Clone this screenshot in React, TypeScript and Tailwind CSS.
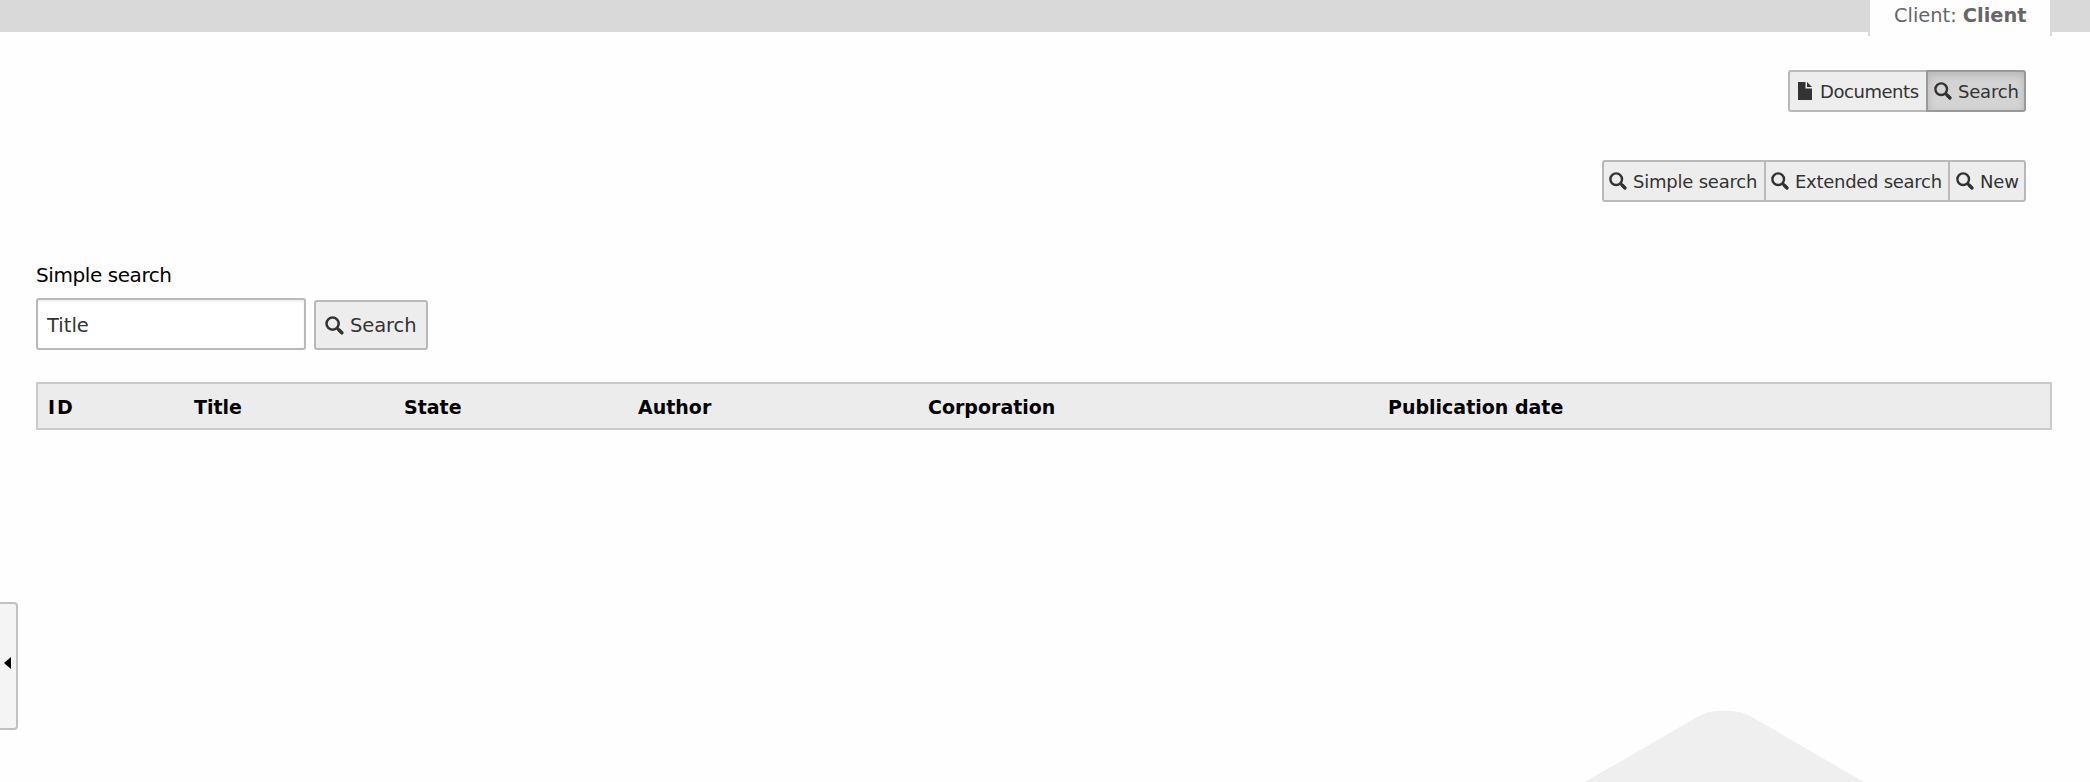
import React from "react";

function SearchIcon({ size }: { size: number }) {
  return (
    <svg width={size} height={size} viewBox="0 0 18 18" fill="none" stroke="#333" className="shrink-0">
      <circle cx="7.2" cy="7.2" r="5.8" strokeWidth="2.4" />
      <path d="M11.4 11.4L16.3 16.3" strokeWidth="2.9" />
      <path d="M13.500 13.500L16 16" strokeWidth="3.2" strokeLinecap="round" />
    </svg>
  );
}

function FileIcon() {
  return (
    <svg width="14" height="18" viewBox="0 0 14 18" fill="#333" className="shrink-0">
      <path d="M0 0h7.5v6.5H14V18H0z" />
      <path d="M9 0l5 5H9z" />
    </svg>
  );
}

const columns = [
  { label: "ID", className: "w-[146px] tracking-[2px]" },
  { label: "Title", className: "w-[210px]" },
  { label: "State", className: "w-[234px]" },
  { label: "Author", className: "w-[290px]" },
  { label: "Corporation", className: "w-[460px]" },
  { label: "Publication date", className: "flex-1" },
];

export default function App() {
  return (
    <div className="relative flex h-[782px] w-[2090px] flex-col overflow-hidden bg-[#fefefe] font-['DejaVu_Sans',sans-serif] text-[18px] leading-none text-[#333]">
      <svg className="absolute left-[1580px] top-[710px]" width="290" height="72" viewBox="0 0 290 72">
        <path d="M5 72L118 6.5Q129 1 139 .8h10Q160 1 171 6.500L284 72z" fill="#efefef" />
      </svg>

      <header className="flex h-8 shrink-0 justify-end bg-[#d9d9d9] pr-[38px]">
        <div className="flex h-9 w-[184px] items-start border-x-2 border-[#d9d9d9] bg-[#fefefe] pl-6 pt-[6px] text-[19.4px] whitespace-pre text-[#666]">
          Client: <b>Client</b>
        </div>
      </header>

      <nav className="mt-[38px] flex h-[42px] shrink-0 justify-end pr-16">
        <button className="flex w-[138px] items-center gap-[8px] rounded-l-[3px] border-2 border-r-0 border-[#b9b9b9] bg-[#ededed] pl-[8px]">
          <FileIcon />
          <span className="pt-[2px] tracking-[-0.45px]">Documents</span>
        </button>
        <button className="flex w-[100px] items-center gap-[6px] rounded-r-[3px] border-2 border-[#999] bg-[#d4d4d4] pl-[6px] shadow-[inset_0_3px_8px_rgba(0,0,0,0.15)]">
          <SearchIcon size={18} />
          <span className="pt-[2px] tracking-[-0.2px]">Search</span>
        </button>
      </nav>

      <nav className="mt-12 flex h-[42px] shrink-0 justify-end pr-16">
        <button className="flex w-[162px] items-center gap-[6px] rounded-l-[3px] border-2 border-r-0 border-[#b9b9b9] bg-[#ededed] pl-[5px] whitespace-nowrap">
          <SearchIcon size={18} />
          <span className="pt-[2px] tracking-[-0.22px]">Simple search</span>
        </button>
        <button className="flex w-[184px] items-center gap-[6px] border-2 border-r-0 border-[#b9b9b9] bg-[#ededed] pl-[5px] whitespace-nowrap">
          <SearchIcon size={18} />
          <span className="pt-[2px] tracking-[-0.28px]">Extended search</span>
        </button>
        <button className="flex w-[78px] items-center gap-[6px] rounded-r-[3px] border-2 border-[#b9b9b9] bg-[#ededed] pl-[6px]">
          <SearchIcon size={18} />
          <span className="pt-[2px] tracking-[-0.2px]">New</span>
        </button>
      </nav>

      <main className="flex flex-col pl-9 pr-[38px] pt-[63px]">
        <label className="h-[33px] text-[20px] tracking-[-0.42px] text-black">Simple search</label>
        <div className="flex items-end gap-2">
          <input
            defaultValue="Title"
            className="h-[52px] w-[270px] rounded-[3px] border-2 border-[#b9b9b9] bg-white pl-[9px] pt-[2px] text-[19.5px] shadow-[inset_0_2px_2px_rgba(0,0,0,0.06)] outline-none"
          />
          <button className="flex h-[50px] w-[114px] items-center gap-[6px] rounded-[3px] border-2 border-[#b9b9b9] bg-[#ededed] pl-[9px] text-[19.5px]">
            <SearchIcon size={19} />
            <span className="pt-[2px] tracking-[-0.1px]">Search</span>
          </button>
        </div>
        <div className="mt-8 flex h-12 items-center border-2 border-[#cbcbcb] bg-[#ececec] pl-[10px] pt-[2px] text-[19px] font-bold text-black">
          {columns.map((c) => (
            <div key={c.label} className={c.className}>{c.label}</div>
          ))}
        </div>
      </main>

      <div className="absolute left-0 top-[602px] flex h-32 w-[18px] items-center rounded-r-[4px] border-2 border-l-0 border-[#c1c1c1] bg-[#f4f4f4] pb-[6px] pl-1">
        <svg width="7" height="12" viewBox="0 0 7 12">
          <path d="M7 0v12L0 6z" fill="#000" />
        </svg>
      </div>
    </div>
  );
}
